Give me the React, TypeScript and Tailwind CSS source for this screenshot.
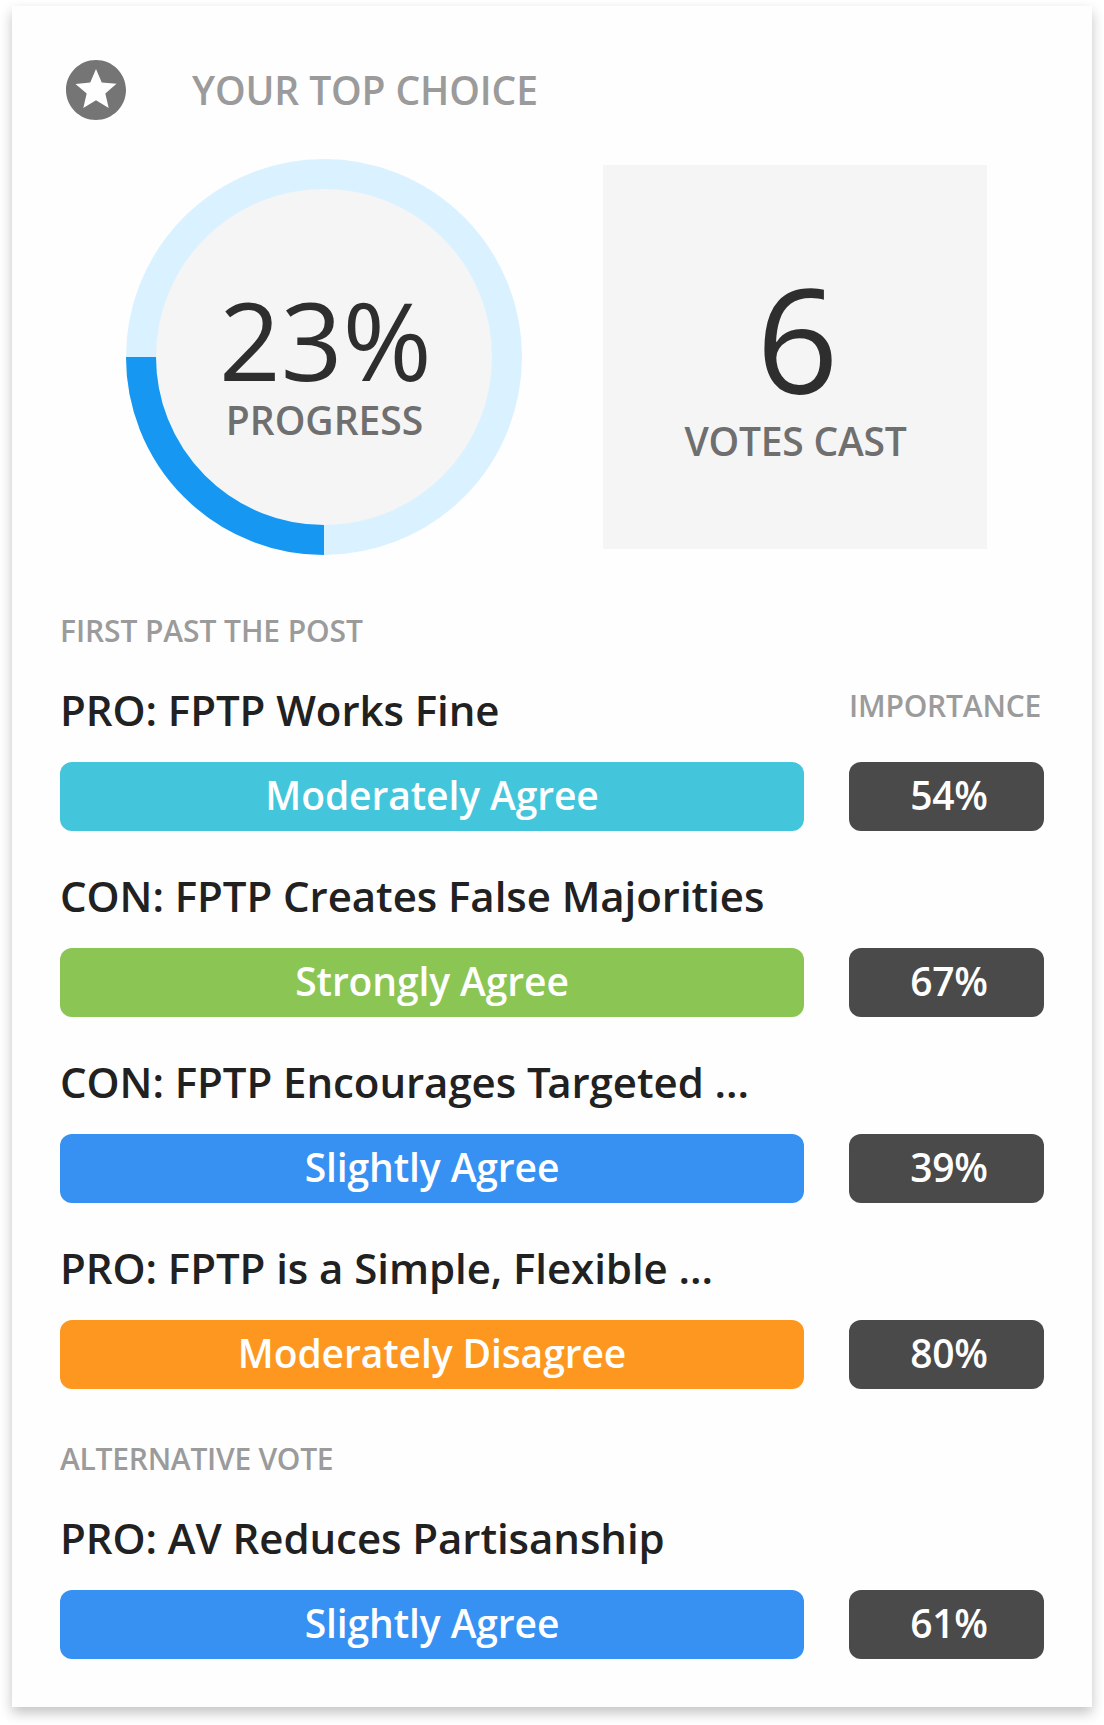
import type { ReactNode } from "react";
import { MdStars } from "react-icons/md";

type Vote = { id: number; title: ReactNode; answer: string; color: string; importance: string };
type Group = { name: string; tracking: string; votes: Vote[] };

const groups: Group[] = [
  {
    name: "FIRST PAST THE POST",
    tracking: "tracking-[-0.09px]",
    votes: [
      { id: 1, title: "PRO: FPTP Works Fine", answer: "Moderately Agree", color: "bg-[#43c6db]", importance: "54%" },
      { id: 2, title: "CON: FPTP Creates False Majorities", answer: "Strongly Agree", color: "bg-[#8bc554]", importance: "67%" },
      {
        id: 3,
        title: (
          <>
            CON: FPTP Encourages <span className="tracking-[-3.5px]">T</span>argeted ...
          </>
        ),
        answer: "Slightly Agree",
        color: "bg-[#3691f3]",
        importance: "39%",
      },
      { id: 4, title: "PRO: FPTP is a Simple, Flexible ...", answer: "Moderately Disagree", color: "bg-[#fe9720]", importance: "80%" },
    ],
  },
  {
    name: "ALTERNATIVE VOTE",
    tracking: "tracking-[-0.27px]",
    votes: [
      { id: 5, title: "PRO: AV Reduces Partisanship", answer: "Slightly Agree", color: "bg-[#3691f3]", importance: "61%" },
    ],
  },
];

function ProgressRing() {
  return (
    <div className="relative h-[396px] w-[396px]">
      <svg className="absolute inset-0" width="396" height="396" viewBox="0 0 396 396">
        <circle cx="198" cy="198" r="183" fill="#f5f5f5" stroke="#daf2ff" strokeWidth="30" />
        <path d="M198 381A183 183 0 0 1 15 198" fill="none" stroke="#1597f2" strokeWidth="30" />
      </svg>
      <div className="relative flex flex-col items-center pt-[127px]">
        <div className="pl-[3px] text-[108px] leading-[108px] text-[#2e2e2e]">23%</div>
        <div className="mt-1.5 pl-px text-[39px] leading-[39px] font-semibold text-[#6f6f6f]">PROGRESS</div>
      </div>
    </div>
  );
}

function VoteRow({ vote, showLabel }: { vote: Vote; showLabel: boolean }) {
  return (
    <div>
      <div className="flex h-14 justify-between whitespace-nowrap">
        <div className="text-[42px] leading-[56px] font-semibold tracking-[-0.06px] text-[#212121]">{vote.title}</div>
        {showLabel && (
          <div className="mt-1 w-[195px] text-[30px] leading-[40px] font-semibold tracking-[-0.2px] text-[#9b9b9b]">
            IMPORTANCE
          </div>
        )}
      </div>
      <div className="mt-6 flex justify-between text-[39px] leading-[65px] font-semibold text-white">
        <div className={`h-[69px] w-[744px] rounded-xl text-center tracking-[-0.1px] ${vote.color}`}>{vote.answer}</div>
        <div className="h-[69px] w-[195px] rounded-xl bg-[#4a4a4a] pl-[5px] text-center tracking-[-0.2px]">
          {vote.importance}
        </div>
      </div>
    </div>
  );
}

export default function App() {
  return (
    <div className="h-[1725px] w-[1104px] overflow-hidden bg-white px-3 pt-1.5 font-['Open_Sans',sans-serif]">
      <div className="h-[1701px] bg-[#fefefe] px-12 pt-12 shadow-[0_6px_12px_rgba(0,0,0,0.24)]">
        <div className="flex h-[72px] items-center">
          <MdStars className="h-[72px] w-[72px] shrink-0 text-[#757575]" />
          <h1 className="-mt-px ml-[60px] text-[39px] leading-[71px] font-semibold tracking-[-0.13px] text-[#9b9b9b]">
            YOUR TOP CHOICE
          </h1>
        </div>
        <div className="mt-[33px] flex items-start pl-[66px]">
          <ProgressRing />
          <div className="mt-1.5 ml-[81px] flex h-[384px] w-[384px] flex-col items-center bg-[#f5f5f5] pt-[101px]">
            <div className="pl-[5px] text-[144px] leading-[144px] text-[#2e2e2e]">6</div>
            <div className="mt-[11px] pl-px text-[39px] leading-[39px] font-semibold tracking-[-0.25px] text-[#6f6f6f]">
              VOTES CAST
            </div>
          </div>
        </div>
        <div className="mt-14 flex flex-col gap-[50px]">
          {groups.map((group, g) => (
            <section key={group.name}>
              <h2 className={`text-[30px] leading-[40px] font-semibold text-[#9b9b9b] ${group.tracking}`}>{group.name}</h2>
              <div className="mt-[31px] flex flex-col gap-[37px]">
                {group.votes.map((vote, i) => (
                  <VoteRow key={vote.id} vote={vote} showLabel={g === 0 && i === 0} />
                ))}
              </div>
            </section>
          ))}
        </div>
      </div>
    </div>
  );
}
